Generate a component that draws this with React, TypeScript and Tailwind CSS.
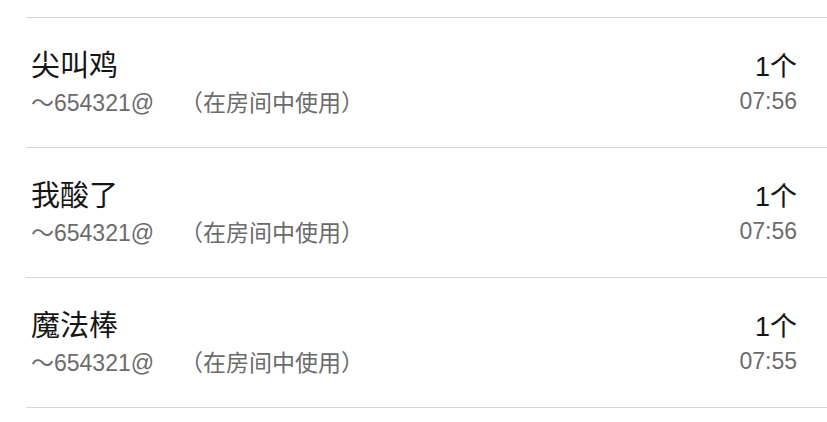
const items = [
  { name: "尖叫鸡", count: "1个", time: "07:56" },
  { name: "我酸了", count: "1个", time: "07:56" },
  { name: "魔法棒", count: "1个", time: "07:55" },
];

const font = { fontFamily: '"Liberation Sans", "Noto Sans CJK SC", sans-serif' };

export default function App() {
  return (
    <div className="min-h-screen bg-white pt-[17px]" style={font}>
      <ul className="ml-[26px] border-b border-[#d6d6d6]">
        {items.map((item) => (
          <li
            key={item.name}
            className="flex h-[130px] items-center justify-between border-t border-[#d6d6d6] pl-[5px] pr-[30px]"
          >
            <div className="flex flex-col">
              <span className="text-[29px] leading-[36px] text-[#151515]">{item.name}</span>
              <span className="mt-[4px] flex text-[23px] leading-[30px] text-[#6b6b6b]">
                <span>～654321@</span>
                <span className="ml-[26px]">（在房间中使用）</span>
              </span>
            </div>
            <div className="flex flex-col items-end">
              <span className="text-[27px] leading-[36px] text-[#151515]">{item.count}</span>
              <span className="mt-[1px] text-[23px] leading-[30px] text-[#6b6b6b]">{item.time}</span>
            </div>
          </li>
        ))}
      </ul>
    </div>
  );
}
